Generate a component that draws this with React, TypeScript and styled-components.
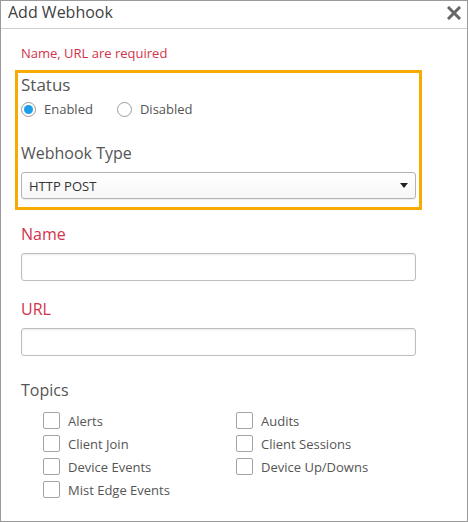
import React from "react";
import styled, { createGlobalStyle } from "styled-components";

const GlobalStyle = createGlobalStyle`
    html, body {
        margin: 0;
        padding: 0;
        background: #ffffff;
    }
    body {
        font-family: "Open Sans", "Liberation Sans", sans-serif;
    }
`;

const Dialog = styled.div`
    box-sizing: border-box;
    width: 468px;
    height: 522px;
    border: 1px solid #9a9a9a;
    background: #fff;
    display: flex;
    flex-direction: column;
`;

const Header = styled.div`
    height: 27px;
    border-bottom: 1px solid #cfcfcf;
    display: flex;
    align-items: center;
    justify-content: space-between;
    padding: 0 5px 0 7px;
`;

const Title = styled.span`
    font-size: 16px;
    color: #3f3f3f;
    line-height: 22px;
    margin-top: -5px;
`;

const Close = styled.span`
    display: flex;
    width: 16px;
    height: 16px;
    align-items: center;
    justify-content: center;
    margin-top: -4px;
`;

const Body = styled.div`
    padding: 15px 20px 0 20px;
    display: flex;
    flex-direction: column;
`;

const Error = styled.div`
    font-size: 13px;
    line-height: 18px;
    color: #d2334c;
`;

const Highlight = styled.div`
    width: 395px;
    margin: 8px 0 0 -6px;
    padding: 1px 3px 8px 3px;
    border: 3px solid #f7ab00;
`;

const Label = styled.div<{ $required?: boolean; $size?: number }>`
    font-size: ${(p) => p.$size ?? 16}px;
    line-height: 22px;
    color: ${(p) => (p.$required ? "#d2334c" : "#555")};
`;

const RadioRow = styled.div`
    display: flex;
    align-items: center;
    height: 22px;
    margin-top: 2px;
    margin-bottom: 22px;
`;

const RadioOption = styled.label`
    display: flex;
    align-items: center;
    font-size: 13px;
    color: #555;
    margin-right: 24px;
`;

const RadioDot = styled.span<{ $checked?: boolean }>`
    box-sizing: border-box;
    width: 15px;
    height: 15px;
    border-radius: 50%;
    border: 1px solid #9c9c9c;
    background: #fff;
    margin-right: 8px;
    display: flex;
    align-items: center;
    justify-content: center;

    &::after {
        content: "";
        width: 9px;
        height: 9px;
        border-radius: 50%;
        background: ${(p) => (p.$checked ? "#1a9fe8" : "transparent")};
    }
`;

const Select = styled.div`
    box-sizing: border-box;
    width: 395px;
    height: 27px;
    margin-top: 8px;
    border: 1px solid #b3b3b3;
    border-radius: 3px;
    background: linear-gradient(#ffffff, #f7f7f7);
    box-shadow: 0 1px 1px rgba(0, 0, 0, 0.08);
    display: flex;
    align-items: center;
    justify-content: space-between;
    padding: 0 7px 0 7px;
    font-size: 13px;
    color: #333;
`;

const Caret = styled.span`
    width: 0;
    height: 0;
    border-left: 4px solid transparent;
    border-right: 4px solid transparent;
    border-top: 5px solid #222;
`;

const Field = styled.div<{ $top: number }>`
    margin-top: ${(p) => p.$top}px;
    display: flex;
    flex-direction: column;
`;

const TextInput = styled.input`
    box-sizing: border-box;
    width: 395px;
    height: 28px;
    margin: 8px 0 0 0;
    border: 1px solid #bdbdbd;
    border-radius: 3px;
    box-shadow: inset 0 1px 2px rgba(0, 0, 0, 0.08);
    outline: none;
    font-family: inherit;
    font-size: 13px;
`;

const Topics = styled.div`
    display: grid;
    grid-template-columns: 193px 180px;
    grid-auto-rows: 23px;
    margin: 8px 0 0 22px;
`;

const Check = styled.label`
    display: flex;
    align-items: center;
    font-size: 13px;
    color: #555;
`;

const Box = styled.span`
    box-sizing: border-box;
    width: 17px;
    height: 17px;
    border: 1px solid #a5a5a5;
    border-radius: 2px;
    background: #fff;
    margin-right: 8px;
`;

const topics = [
    "Alerts",
    "Audits",
    "Client Join",
    "Client Sessions",
    "Device Events",
    "Device Up/Downs",
    "Mist Edge Events",
];

export default function App() {
    return (
        <>
            <GlobalStyle />
            <Dialog>
                <Header>
                    <Title>Add Webhook</Title>
                    <Close>
                        <svg width="14" height="14" viewBox="0 0 14 14">
                            <path d="M2 2 L12 12 M12 2 L2 12" stroke="#666" strokeWidth="3" strokeLinecap="square" />
                        </svg>
                    </Close>
                </Header>
                <Body>
                    <Error>Name, URL are required</Error>
                    <Highlight>
                        <Label $size={17}>Status</Label>
                        <RadioRow>
                            <RadioOption><RadioDot $checked />Enabled</RadioOption>
                            <RadioOption><RadioDot />Disabled</RadioOption>
                        </RadioRow>
                        <Label>Webhook Type</Label>
                        <Select>
                            HTTP POST
                            <Caret />
                        </Select>
                    </Highlight>
                    <Field $top={13}>
                        <Label $required>Name</Label>
                        <TextInput type="text" />
                    </Field>
                    <Field $top={17}>
                        <Label $required>URL</Label>
                        <TextInput type="text" />
                    </Field>
                    <Field $top={23}>
                        <Label>Topics</Label>
                        <Topics>
                            {topics.map((t) => (
                                <Check key={t}><Box />{t}</Check>
                            ))}
                        </Topics>
                    </Field>
                </Body>
            </Dialog>
        </>
    );
}
